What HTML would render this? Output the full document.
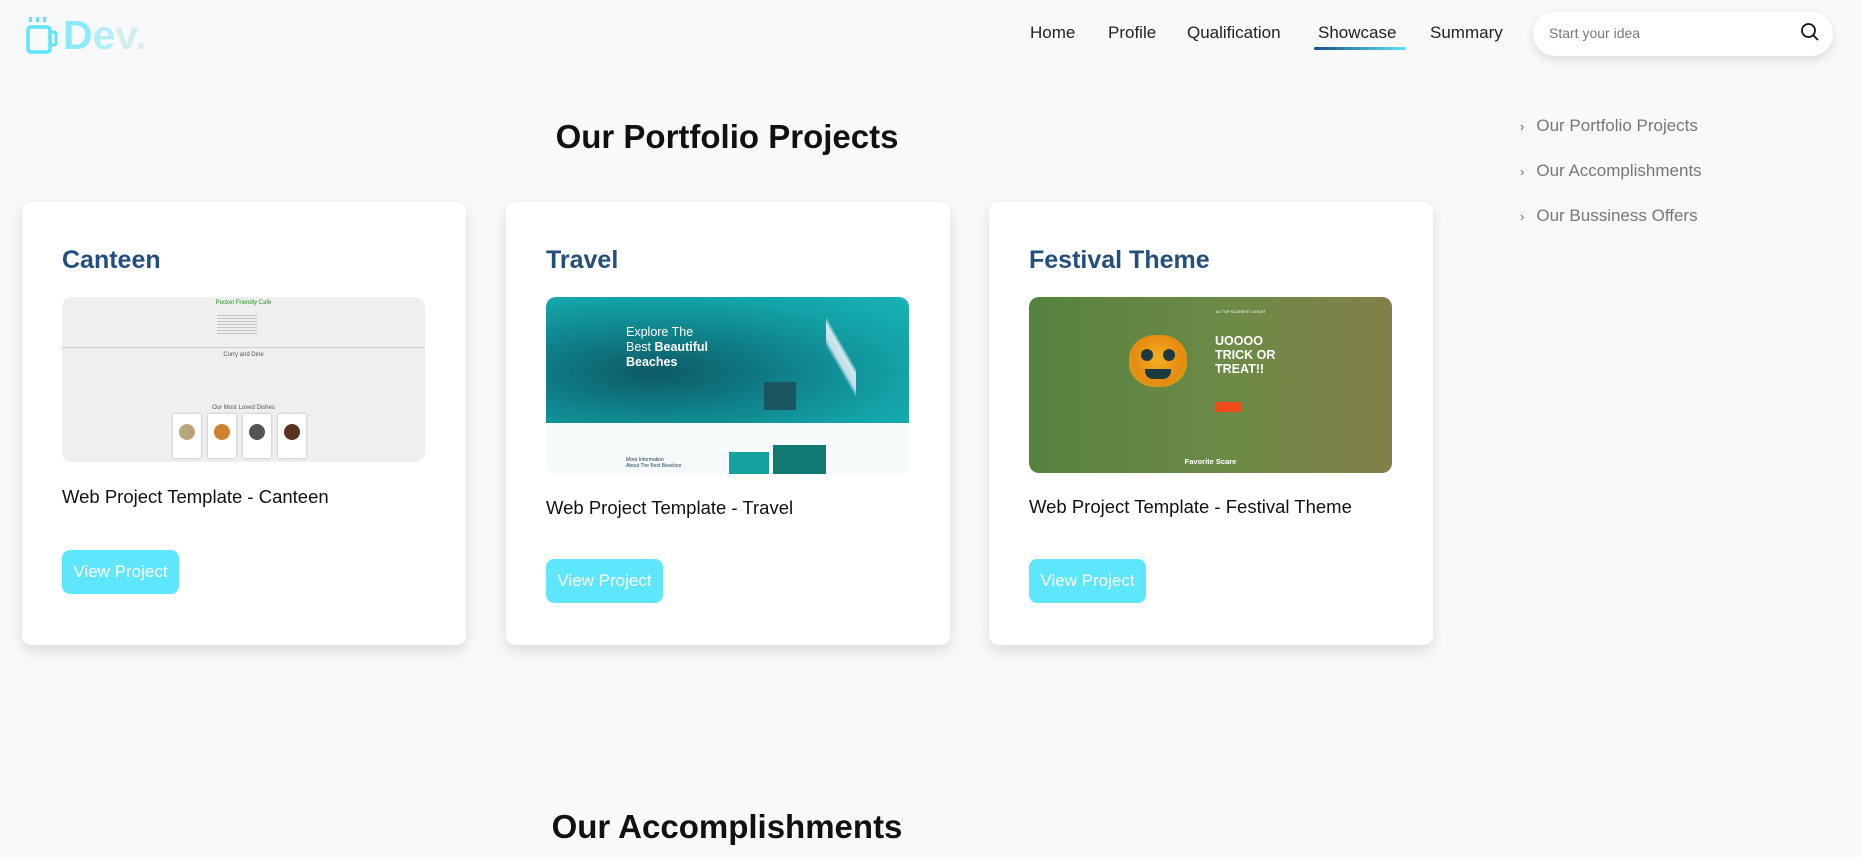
<!DOCTYPE html>
<html><head><meta charset="utf-8"><style>
*{margin:0;padding:0;box-sizing:border-box}
body{width:1862px;height:857px;overflow:hidden;background:#f8f9fb;font-family:"Liberation Sans",sans-serif;position:relative;color:#111}
.a{position:absolute}
.nav{top:23px;font-size:17px;color:#222}
.card{position:absolute;top:202px;width:444px;height:443px;background:#fff;border-radius:10px;box-shadow:0 6px 14px rgba(0,0,0,.12)}
.card h3{position:absolute;left:40px;top:44px;font-size:25px;color:#244f7c;font-weight:bold}
.img{position:absolute;left:40px;top:95px;width:363px;border-radius:10px;overflow:hidden}
.desc{position:absolute;left:40px;font-size:18.5px;color:#111}
.btn{position:absolute;left:40px;width:117px;height:44px;background:#5ee7fc;color:#fff;border-radius:8px;font-size:17px;text-align:center;line-height:44px}
.side{left:1520px;font-size:17px;color:#777}
.side span{font-size:13px;margin-right:12px;color:#666}
</style></head><body>
<svg class="a" style="left:26px;top:17px" width="32" height="38" viewBox="0 0 32 38"><g fill="#5de6fb"><rect x="3" y="0" width="3" height="5"/><rect x="10" y="0" width="3" height="5"/><rect x="17" y="0" width="3" height="5"/></g><rect x="2" y="10" width="22" height="25" rx="3" fill="none" stroke="#5de6fb" stroke-width="3.5"/><rect x="24" y="15" width="6" height="13" rx="2" fill="none" stroke="#5de6fb" stroke-width="3"/></svg>
<div class="a" style="left:63px;top:12px;font-size:41px;font-weight:bold;letter-spacing:0"><span style="color:#8eeaf8">D</span><span style="color:#b3eef5">e</span><span style="color:#d4eef0">v</span><span style="color:#e6ecee">.</span></div>
<div class="a nav" style="left:1030px">Home</div>
<div class="a nav" style="left:1108px">Profile</div>
<div class="a nav" style="left:1187px">Qualification</div>
<div class="a nav" style="left:1318px">Showcase</div>
<div class="a" style="left:1314px;top:47px;width:92px;height:3px;border-radius:2px;background:linear-gradient(90deg,#1c4f82,#5de6fb)"></div>
<div class="a nav" style="left:1430px">Summary</div>
<div class="a" style="left:1533px;top:12px;width:300px;height:44px;background:#fff;border-radius:22px;box-shadow:0 4px 10px rgba(0,0,0,.12)"></div>
<div class="a" style="left:1549px;top:25px;font-size:14px;color:#777">Start your idea</div>
<svg class="a" style="left:1800px;top:22px" width="20" height="20" viewBox="0 0 20 20"><circle cx="8.5" cy="8.5" r="6.5" fill="none" stroke="#111" stroke-width="1.8"/><line x1="13.3" y1="13.3" x2="18" y2="18" stroke="#111" stroke-width="1.8"/></svg>
<div class="a side" style="top:116px"><span>›</span>Our Portfolio Projects</div>
<div class="a side" style="top:161px"><span>›</span>Our Accomplishments</div>
<div class="a side" style="top:206px"><span>›</span>Our Bussiness Offers</div>
<div class="a" style="left:0;width:1454px;top:118px;text-align:center;font-size:33px;font-weight:bold;color:#111">Our Portfolio Projects</div>
<div class="a" style="left:0;width:1454px;top:808px;text-align:center;font-size:33px;font-weight:bold;color:#111">Our Accomplishments</div>

<div class="card" style="left:22px">
<h3>Canteen</h3>
<div class="img" style="height:165px;background:#efefef">
<div class="a" style="left:0;width:363px;top:3px;text-align:center;font-size:6px;color:#2a9a2a">Pocket Friendly Cafe</div>
<div class="a" style="left:155px;top:18px;width:40px;height:20px;background:repeating-linear-gradient(#999 0 1px,transparent 1px 3px);opacity:.5"></div>
<div class="a" style="left:0;top:50px;width:363px;height:1px;background:#ccc"></div>
<div class="a" style="left:0;width:363px;top:55px;text-align:center;font-size:6px;color:#555">Curry and Dine</div>
<div class="a" style="left:0;width:363px;top:108px;text-align:center;font-size:6px;color:#555">Our Most Loved Dishes</div>
<div class="a" style="left:111px;top:117px;width:28px;height:44px;background:#fff;box-shadow:0 0 2px #aaa"><div style="margin:10px 6px;width:16px;height:16px;border-radius:50%;background:#b9a57a"></div></div>
<div class="a" style="left:146px;top:117px;width:28px;height:44px;background:#fff;box-shadow:0 0 2px #aaa"><div style="margin:10px 6px;width:16px;height:16px;border-radius:50%;background:#d08030"></div></div>
<div class="a" style="left:181px;top:117px;width:28px;height:44px;background:#fff;box-shadow:0 0 2px #aaa"><div style="margin:10px 6px;width:16px;height:16px;border-radius:50%;background:#555"></div></div>
<div class="a" style="left:216px;top:117px;width:28px;height:44px;background:#fff;box-shadow:0 0 2px #aaa"><div style="margin:10px 6px;width:16px;height:16px;border-radius:50%;background:#5a3020"></div></div>
</div>
<div class="desc" style="top:284px">Web Project Template - Canteen</div>
<div class="btn" style="top:348px">View Project</div>
</div>

<div class="card" style="left:506px">
<h3>Travel</h3>
<div class="img" style="height:177px;background:#f7fbfc">
<div class="a" style="left:0;top:0;width:363px;height:126px;background:radial-gradient(ellipse at 30% 60%,#0d5a66 0,#0f7f88 35%,#13a3a8 70%,#18b3b5 100%)"></div>
<div class="a" style="left:80px;top:28px;color:#fff;font-size:12.5px;line-height:15px">Explore The<br>Best <b>Beautiful</b><br><b>Beaches</b></div>
<div class="a" style="left:218px;top:85px;width:32px;height:28px;background:#1b5560"></div>
<div class="a" style="left:280px;top:10px;width:30px;height:100px;background:linear-gradient(60deg,transparent 40%,#eef 45%,#fff 55%,transparent 60%);opacity:.8"></div>
<div class="a" style="left:80px;top:160px;font-size:5px;color:#245">More Information<br>About The Best Beaches</div>
<div class="a" style="left:183px;top:155px;width:40px;height:22px;background:#15a0a0"></div>
<div class="a" style="left:227px;top:148px;width:53px;height:29px;background:#117a70"></div>
</div>
<div class="desc" style="top:295px">Web Project Template - Travel</div>
<div class="btn" style="top:357px">View Project</div>
</div>

<div class="card" style="left:989px">
<h3>Festival Theme</h3>
<div class="img" style="height:176px;background:linear-gradient(90deg,#57823f,#6d8a47 55%,#828048)">
<div class="a" style="left:100px;top:38px;width:58px;height:52px;border-radius:45%;background:radial-gradient(circle at 50% 45%,#f5b020,#e88a10 60%,#a8c020)"></div>
<div class="a" style="left:112px;top:52px;width:12px;height:12px;border-radius:50%;background:#1c3a40"></div>
<div class="a" style="left:134px;top:52px;width:12px;height:12px;border-radius:50%;background:#1c3a40"></div>
<div class="a" style="left:116px;top:72px;width:26px;height:10px;border-radius:0 0 8px 8px;background:#1c3a40"></div>
<div class="a" style="left:187px;top:12px;font-size:4px;color:#fff">#1 TOP SCARIEST GHOST</div>
<div class="a" style="left:186px;top:37px;font-size:12.5px;line-height:14px;color:#fff;font-weight:bold">UOOOO<br>TRICK OR<br>TREAT!!</div>
<div class="a" style="left:186px;top:105px;width:26px;height:10px;background:#f04a1a"></div>
<div class="a" style="left:0;width:363px;top:160px;text-align:center;font-size:7.5px;color:#fff;font-weight:bold">Favorite Scare</div>
</div>
<div class="desc" style="top:294px">Web Project Template - Festival Theme</div>
<div class="btn" style="top:357px">View Project</div>
</div>
</body></html>
